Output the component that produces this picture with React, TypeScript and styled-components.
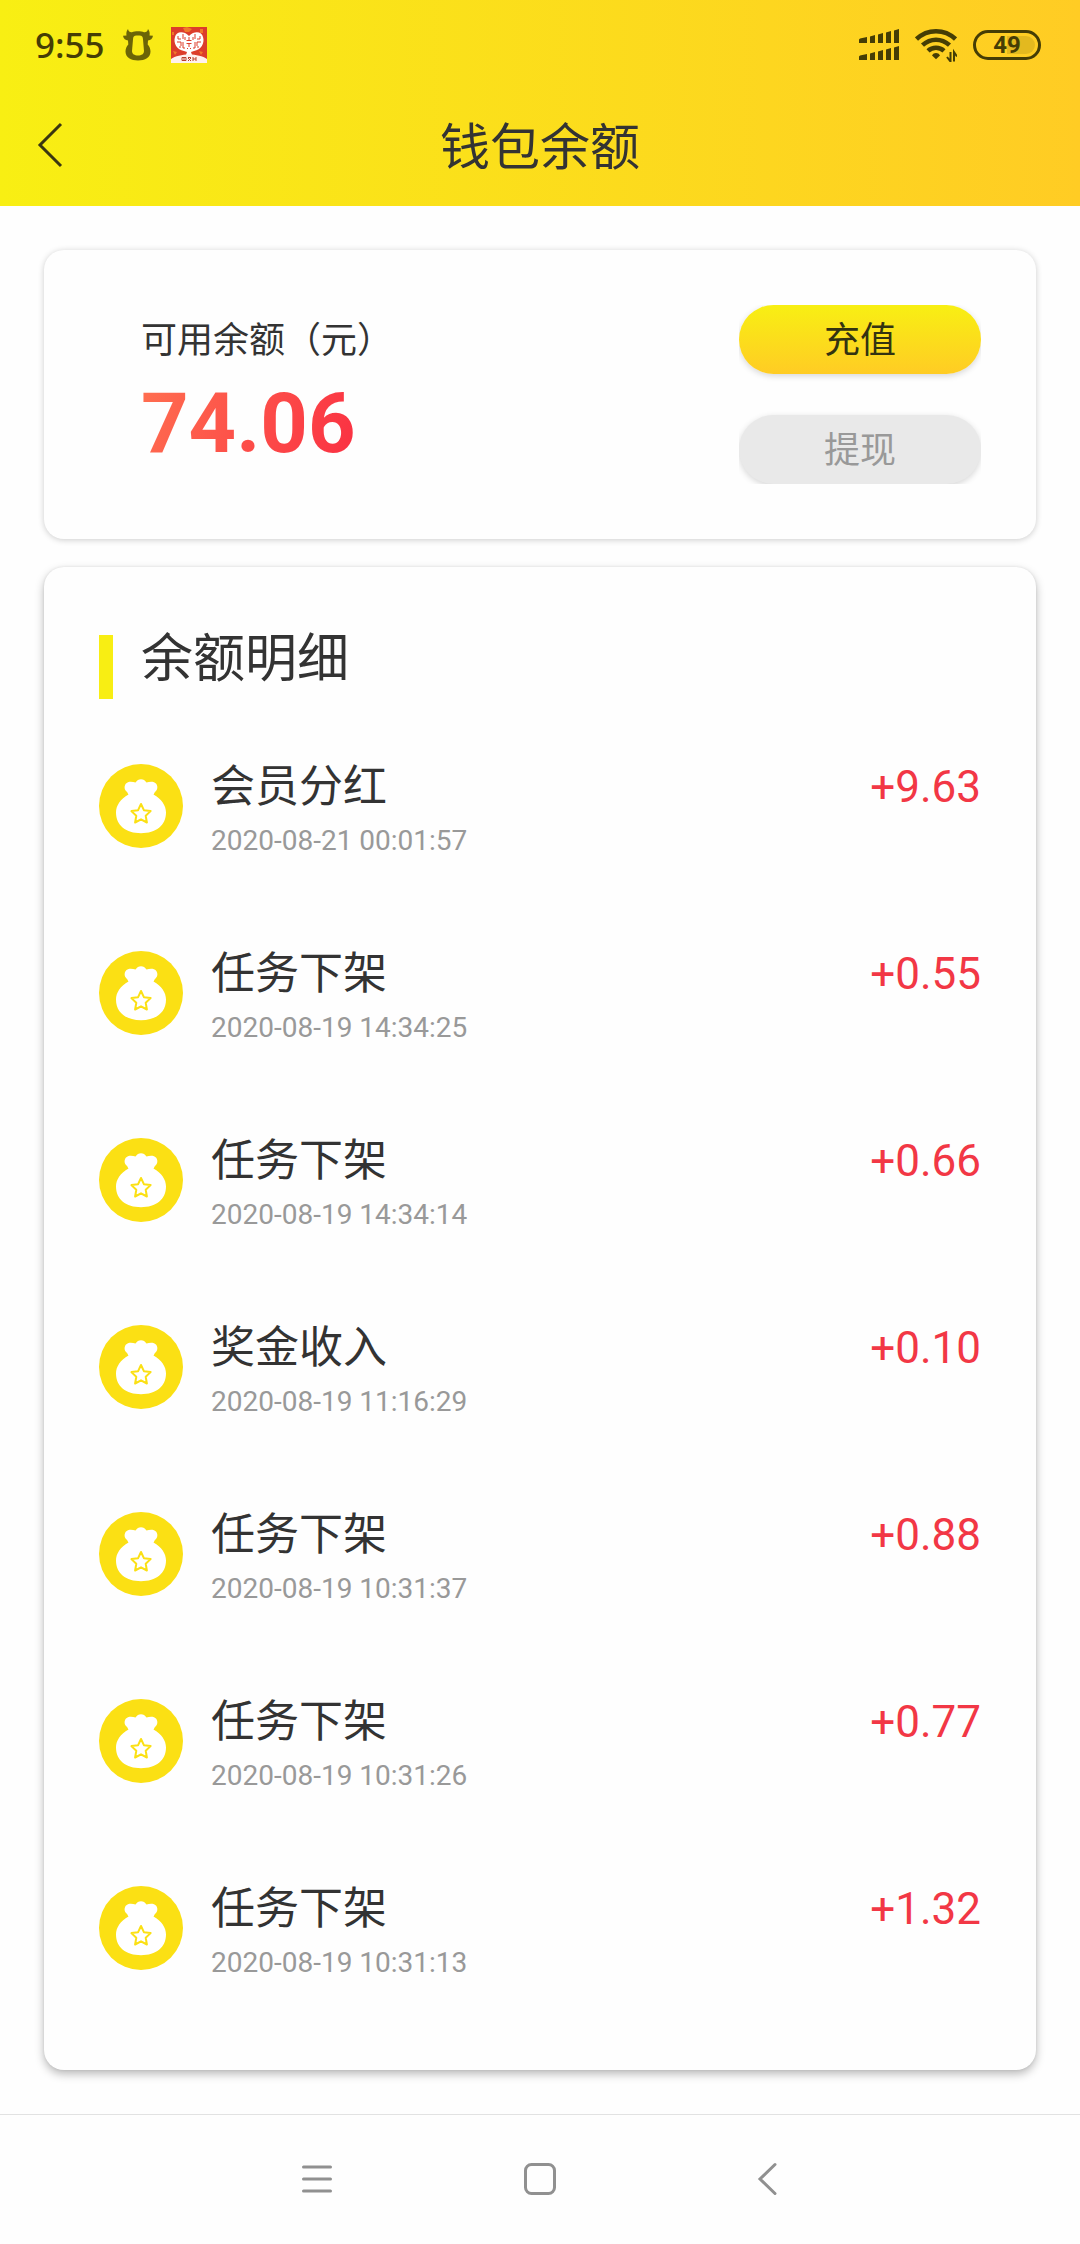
import React from 'react';
import styled, { createGlobalStyle } from 'styled-components';

const GlobalStyle = createGlobalStyle`
  * { box-sizing: border-box; }
  body {
    margin: 0;
    background: #fefefe;
    color: #333;
    font-family: Roboto, "Noto Sans CJK SC", sans-serif;
  }
  h1, h2, p, ul { margin: 0; padding: 0; font-weight: 400; }
  ul { list-style: none; }
  button { border: 0; padding: 0; background: none; color: inherit; font: inherit; cursor: pointer; }
  svg { display: block; }
`;

const Page = styled.div`
  display: flex;
  flex-direction: column;
  min-height: 100vh;
`;

const Header = styled.header`
  background: linear-gradient(90deg, #f8ef13, #ffcc24);
`;

const StatusBar = styled.div`
  display: flex;
  align-items: center;
  justify-content: space-between;
  height: 90px;
  padding: 0 39px 0 35px;
  color: #453d05;
`;

const StatusGroup = styled.div<{ $gap: number }>`
  display: flex;
  align-items: center;
  gap: ${(p) => p.$gap}px;
`;

const Clock = styled.time`
  font-family: "Noto Sans", sans-serif;
  font-size: 35px;
  font-weight: 500;
  line-height: 44px;
`;

const Battery = styled.div`
  display: flex;
  align-items: center;
  justify-content: center;
  width: 68px;
  height: 30px;
  border: 3px solid #453d05;
  border-radius: 15px;
  background: linear-gradient(90deg, transparent 50%, #e3b91f 50%) content-box;
  padding: 3px;
  font-size: 24px;
  font-weight: 700;
  line-height: 24px;
`;

const TitleBar = styled.div`
  display: grid;
  grid-template-columns: 100px 1fr 100px;
  align-items: center;
  height: 116px;
`;

const BackButton = styled.button`
  height: 80px;
  padding: 0 0 6px 36px;
`;

const Title = styled.h1`
  font-size: 50px;
  line-height: 76px;
  text-align: center;
`;

const Main = styled.main`
  display: flex;
  flex: 1;
  flex-direction: column;
  gap: 28px;
  padding: 44px;
`;

const Card = styled.section<{ $raised?: boolean }>`
  padding: 55px;
  border-radius: 20px;
  background: #fefefe;
  box-shadow: ${(p) =>
    p.$raised
      ? '0 4px 10px rgba(0, 0, 0, 0.28), 0 0 3px rgba(0, 0, 0, 0.08)'
      : '0 1px 6px rgba(0, 0, 0, 0.2)'};
`;

const BalanceCard = styled(Card)`
  display: flex;
  justify-content: space-between;
`;

const Balance = styled.div`
  padding-left: 42px;
`;

const BalanceLabel = styled.p`
  font-size: 36px;
  line-height: 72px;
`;

const BalanceValue = styled.p`
  width: fit-content;
  background: linear-gradient(110deg, #ff6f50, #fa2f42);
  background-clip: text;
  color: transparent;
  font-size: 83px;
  font-weight: 700;
  line-height: 94px;
`;

const Actions = styled.div`
  display: flex;
  flex-direction: column;
  gap: 41px;
  overflow: hidden;
`;

const ActionButton = styled.button<{ $primary?: boolean }>`
  width: 242px;
  height: 69px;
  padding-top: 3px;
  border-radius: 35px;
  background: ${(p) => (p.$primary ? 'linear-gradient(180deg, #f8ef13, #ffcc24)' : '#e9e9e9')};
  box-shadow: 0 2px 6px rgba(0, 0, 0, 0.16);
  color: ${(p) => (p.$primary ? '#333311' : '#999')};
  font-size: 36px;
  line-height: 66px;
`;

const DetailCard = styled(Card)`
  flex: 1;
  padding-bottom: 85px;
`;

const SectionHead = styled.div`
  display: flex;
  gap: 28px;
  height: 77px;
  margin-bottom: 65px;
`;

const Marker = styled.span`
  align-self: flex-end;
  width: 14px;
  height: 64px;
  background: #f8ee13;
`;

const SectionTitle = styled.h2`
  font-size: 52px;
  line-height: 76px;
`;

const Records = styled.ul`
  display: flex;
  flex-direction: column;
  gap: 88px;
`;

const Record = styled.li`
  display: flex;
  align-items: flex-start;
`;

const RecordText = styled.div`
  display: flex;
  flex: 1;
  flex-direction: column;
  gap: 9px;
  margin-left: 28px;
`;

const RecordName = styled.p`
  font-size: 44px;
  line-height: 46px;
`;

const RecordTime = styled.time`
  color: #999;
  font-size: 28px;
  line-height: 44px;
`;

const Amount = styled.span`
  color: #f23745;
  font-size: 44px;
  line-height: 46px;
`;

const SystemNav = styled.nav`
  display: flex;
  justify-content: center;
  height: 130px;
  padding-bottom: 2px;
  border-top: 1px solid #e2e2e2;
  color: #909090;
`;

const NavButton = styled.button`
  display: flex;
  align-items: center;
  justify-content: center;
  width: 225px;
`;

const BullIcon = () => (
  <svg width="32" height="32" viewBox="0 0 32 32" fill="none" aria-hidden="true">
    <path
      fill="#6b6407"
      fillRule="evenodd"
      d="M6 0c.500 2.500 2 3.500 4 3.200C13 2 19 2 22 3.200c2 .300 3.500-.700 4-3.200 1.500 2 2 4 1.500 6.500l3.500.300c-.500 3-2.500 4.500-5 4.700l-.300 4c1.800 2 2.800 4.500 2.800 7C28.500 28.500 23 31.500 16 31.500S3.500 28.500 3.500 22.500c0-2.500 1-5 2.800-7l-.300-4C3.500 11.300 1.500 9.800 1 6.800l3.500-.300C4 4 4.500 2 6 0ZM14.500 6.500C12 6.500 11 8 11 10.500L10 22c0 3 2.500 4.500 6 4.500s6-1.500 6-4.500l-1-11.500c0-2.500-1-4-3.500-4Z"
    />
  </svg>
);

const AppIcon = () => (
  <svg width="36" height="36" viewBox="0 0 36 36" fill="none" aria-hidden="true">
    <rect width="36" height="36" fill="#dc3d2b" />
    <path fill="#f0792b" d="m12 1 4-1 5 2-3 3-4 0ZM29 2h3v4h-3ZM2 24l4 1-2 3ZM28 24l4 1-2 3ZM1 5h2v3H1Z" />
    <path fill="#fff" d="M4 10c1-5 8-7 14-1 6-6 13-4 14 1 2 6-2 13-9 14l-3 1 1 3h-6l1-3-3-1C6 23 2 16 4 10Z" />
    <path
      stroke="#dc3d2b"
      d="M7 9v3h3M6 15h4v4M12 7v5M14 10v3M12 15v6h2M9 21v-2M29 9v3h-3M30 15h-4v4M24 7v5M22 10v3M24 15v6h-2M27 21v-2M18 10v3M15.500 13.500h5M15.500 16.500h5M18 17v3M16 21.500h1M19 21.500h1"
    />
    <path fill="#fff1ee" d="M0 32c8-6 28-6 36 0v4H0Z" />
    <path stroke="#b8402f" d="M11 30.500h4v3h-4ZM13 30v4M17 30.500h3M17 34l3-3M17 31l3 3M22 30v4M22 32h3M25 30v4" />
  </svg>
);

const SignalIcon = () => (
  <svg width="40" height="32" viewBox="0 0 40 32" fill="currentColor" aria-hidden="true">
    <path d="M0 10.500l1-1 7-1.500v6H0ZM11 7.500l5-1.500v8h-5ZM19 5.500l5-1.500v10h-5ZM27 3.500l5-1.500v12h-5ZM35 1.500l5-1.500v14h-5Z" />
    <path d="M0 27.500l1-1 7-1.500v6H0ZM11 24.500l5-1.500v8h-5ZM19 22.500l5-1.500v10h-5ZM27 20.500l5-1.500v12h-5ZM35 18.500l5-1.500v14h-5Z" />
  </svg>
);

const WifiIcon = () => (
  <svg width="42" height="34" viewBox="0 0 42 34" fill="none" stroke="currentColor" aria-hidden="true">
    <g strokeWidth="4.500">
      <path d="M1.500 11C12.500 .500 29.500 .500 40.500 11" />
      <path d="M7.500 17.200C15.500 9.800 26.500 9.800 34.500 17.200" />
      <path d="M13 22.800c4.500-4.200 11.500-4.200 16 0" />
    </g>
    <path fill="currentColor" stroke="none" d="M17 27.500c1.500-3.300 6.500-3.300 8 0l-4 3.800Z" />
    <path strokeWidth="2" d="M35.500 24v9.500l-3.500-4.500M39 33.500v-9.500l3 4.500" />
  </svg>
);

const MoneyBagIcon = () => (
  <svg width="84" height="84" viewBox="0 0 84 84" aria-hidden="true">
    <circle cx="42" cy="42" r="42" fill="#fbe014" />
    <path
      fill="#fff"
      d="M29.500 30.500c-1-1-.500-1.800-2.200-3.300-2.800-2.400-2-7.700 1.700-9 2.500-.900 5-.400 7.500.300 2.500-4.500 8.500-4.500 11 0 2.500-.700 5-1.200 7.500-.300 3.700 1.300 4.500 6.600 1.700 9-1.700 1.500-1.200 2.300-2.200 3.300C62.500 35 67 41.500 67 48.500 67 61.500 57 69.200 42 69.200S17 61.500 17 48.500C17 41.500 21.500 35 29.500 30.500Z"
    />
    <path
      fill="none"
      stroke="#fbe014"
      strokeWidth="2"
      strokeLinejoin="round"
      d="m42 40 2.900 6.200 6.700.900-4.900 4.700 1.200 6.700-5.900-3.200-5.900 3.200 1.200-6.700-4.900-4.700 6.700-.900Z"
    />
  </svg>
);

const records = [
  { name: '会员分红', time: '2020-08-21 00:01:57', amount: '+9.63' },
  { name: '任务下架', time: '2020-08-19 14:34:25', amount: '+0.55' },
  { name: '任务下架', time: '2020-08-19 14:34:14', amount: '+0.66' },
  { name: '奖金收入', time: '2020-08-19 11:16:29', amount: '+0.10' },
  { name: '任务下架', time: '2020-08-19 10:31:37', amount: '+0.88' },
  { name: '任务下架', time: '2020-08-19 10:31:26', amount: '+0.77' },
  { name: '任务下架', time: '2020-08-19 10:31:13', amount: '+1.32' },
];

export default function App() {
  return (
    <Page>
      <GlobalStyle />
      <Header>
        <StatusBar>
          <StatusGroup $gap={17}>
            <Clock>9:55</Clock>
            <BullIcon />
            <AppIcon />
          </StatusGroup>
          <StatusGroup $gap={16}>
            <SignalIcon />
            <WifiIcon />
            <Battery>49</Battery>
          </StatusGroup>
        </StatusBar>
        <TitleBar>
          <BackButton aria-label="返回">
            <svg width="28" height="48" viewBox="0 0 28 48" fill="none" stroke="#3a3610" strokeWidth="3">
              <path d="M25 3 4 24l21 21" />
            </svg>
          </BackButton>
          <Title>钱包余额</Title>
        </TitleBar>
      </Header>
      <Main>
        <BalanceCard>
          <Balance>
            <BalanceLabel>可用余额（元）</BalanceLabel>
            <BalanceValue>74.06</BalanceValue>
          </Balance>
          <Actions>
            <ActionButton $primary>充值</ActionButton>
            <ActionButton>提现</ActionButton>
          </Actions>
        </BalanceCard>
        <DetailCard $raised>
          <SectionHead>
            <Marker />
            <SectionTitle>余额明细</SectionTitle>
          </SectionHead>
          <Records>
            {records.map((record) => (
              <Record key={record.time}>
                <MoneyBagIcon />
                <RecordText>
                  <RecordName>{record.name}</RecordName>
                  <RecordTime>{record.time}</RecordTime>
                </RecordText>
                <Amount>{record.amount}</Amount>
              </Record>
            ))}
          </Records>
        </DetailCard>
      </Main>
      <SystemNav>
        <NavButton aria-label="最近任务">
          <svg width="40" height="40" viewBox="0 0 40 40" stroke="currentColor" strokeWidth="3" strokeLinecap="round">
            <path d="M8.500 8h27M8.500 20h27M8.500 32h27" />
          </svg>
        </NavButton>
        <NavButton aria-label="主屏幕">
          <svg width="40" height="40" viewBox="0 0 40 40" fill="none" stroke="currentColor" strokeWidth="3">
            <rect x="5.500" y="5.500" width="29" height="29" rx="6" />
          </svg>
        </NavButton>
        <NavButton aria-label="后退">
          <svg width="40" height="40" viewBox="0 0 40 40" fill="none" stroke="currentColor" strokeWidth="3" strokeLinecap="round">
            <path d="M30 5.500 15 20l15 14.500" />
          </svg>
        </NavButton>
      </SystemNav>
    </Page>
  );
}
